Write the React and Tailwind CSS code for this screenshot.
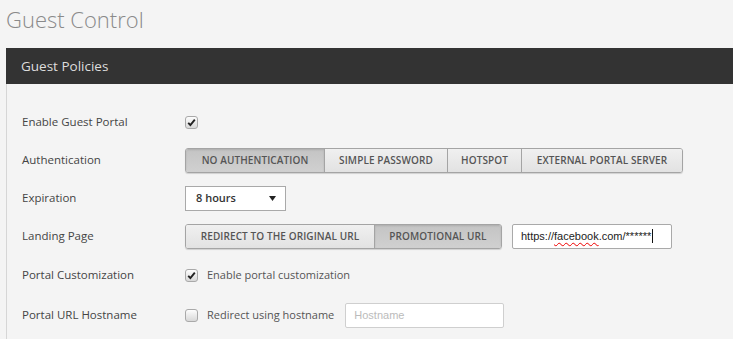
function Check({ checked }) {
  return (
    <span className="flex h-[13px] w-[13px] items-center justify-center rounded-[3px] border border-[#a9a9a9] bg-gradient-to-b from-[#fdfdfd] to-[#d8d8d8]">
      {checked && (
        <svg width="9" height="9" viewBox="0 0 9 9">
          <path d="M1.2 4.8 L3.4 7 L7.8 1.6" fill="none" stroke="#222" strokeWidth="1.9" />
        </svg>
      )}
    </span>
  );
}

function Segmented({ items }) {
  return (
    <div className="flex h-[25px] overflow-hidden rounded-[3px] border border-[#a4a4a4] shadow-[0_1px_1px_rgba(0,0,0,0.15)]">
      {items.map((it, i) => (
        <div
          key={it.label}
          style={{ width: it.w }}
          className={
            "flex items-center justify-center text-[10px] font-semibold tracking-[0.1px] text-[#555] " +
            (i > 0 ? "border-l border-[#a4a4a4] " : "") +
            (it.active
              ? "bg-gradient-to-b from-[#c4c4c4] to-[#d0d0d0] shadow-[inset_0_1px_2px_rgba(0,0,0,0.12)]"
              : "bg-gradient-to-b from-[#f0f0f0] to-[#e2e2e2]")
          }
        >
          {it.label}
        </div>
      ))}
    </div>
  );
}

function Row({ label, tall, children }) {
  return (
    <div className={"flex items-center " + (tall ? "h-[40px]" : "h-[38px]")}>
      <div className="w-[163px] text-[11.5px] text-[#444]">{label}</div>
      <div className="flex items-center">{children}</div>
    </div>
  );
}

export default function App() {
  return (
    <div className="min-h-[339px] bg-[#f4f4f4] font-['Open_Sans',sans-serif]">
      <h1 className="h-[48px] pl-[6px] pt-[4px] text-[22px] font-light leading-[30px] text-[#8a8a8a]">Guest Control</h1>
      <div className="ml-[6px]">
        <div className="flex h-[36px] items-center bg-[#333] pl-[15px] text-[13.5px] text-[#ddd]">Guest Policies</div>
        <div className="h-[255px] border-l border-[#d6d6d6] pl-[15px] pt-[19px]">
          <Row label="Enable Guest Portal">
            <Check checked />
          </Row>
          <Row label="Authentication">
            <Segmented
              items={[
                { label: "NO AUTHENTICATION", w: 138, active: true },
                { label: "SIMPLE PASSWORD", w: 123 },
                { label: "HOTSPOT", w: 74 },
                { label: "EXTERNAL PORTAL SERVER", w: 161 },
              ]}
            />
          </Row>
          <Row label="Expiration">
            <div className="flex h-[25px] w-[101px] items-center justify-between border border-[#a9a9a9] bg-white pl-[10px] pr-[9px] text-[11px] font-semibold text-[#333]">
              <span>8 hours</span>
              <svg width="7" height="5" viewBox="0 0 7 5">
                <path d="M0 0 H7 L3.5 5 Z" fill="#222" />
              </svg>
            </div>
          </Row>
          <Row label="Landing Page">
            <Segmented
              items={[
                { label: "REDIRECT TO THE ORIGINAL URL", w: 188 },
                { label: "PROMOTIONAL URL", w: 127, active: true },
              ]}
            />
            <div className="ml-[10px] flex h-[25px] w-[160px] items-center rounded-[2px] border border-[#a9a9a9] bg-white pl-[8px] font-['Liberation_Sans',Arial,sans-serif] text-[11px] text-[#222]">
              <span>https://</span>
              <span className="underline decoration-[#e00] decoration-wavy decoration-[1px] underline-offset-[2px]">facebook</span>
              <span>.com/******</span>
              <span className="ml-px h-[14px] w-px bg-[#111]" />
            </div>
          </Row>
          <Row label="Portal Customization" tall>
            <Check checked />
            <span className="ml-[9px] text-[11px] text-[#555]">Enable portal customization</span>
          </Row>
          <Row label="Portal URL Hostname" tall>
            <Check />
            <span className="ml-[9px] text-[11px] text-[#555]">Redirect using hostname</span>
            <div className="ml-[11px] flex h-[25px] w-[159px] items-center rounded-[2px] border border-[#cfcfcf] bg-white pl-[8px] font-['Liberation_Sans',Arial,sans-serif] text-[11px] text-[#bbb]">
              Hostname
            </div>
          </Row>
        </div>
      </div>
    </div>
  );
}
